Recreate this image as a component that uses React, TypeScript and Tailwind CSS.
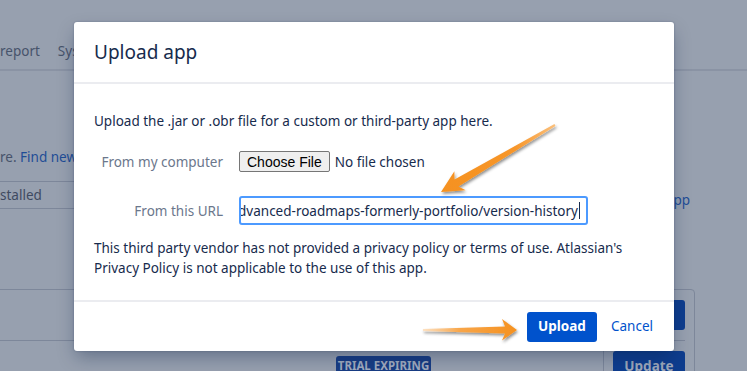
import React from 'react';

const FONT = "font-['Noto_Sans',sans-serif]";

// Orange callout arrows drawn over the dialog
function Arrows() {
  return (
    <svg className="pointer-events-none absolute inset-0" width="747" height="371" viewBox="0 0 747 371">
      <defs>
        <linearGradient id="a1" x1="555" y1="125" x2="441" y2="192" gradientUnits="userSpaceOnUse">
          <stop offset="0" stopColor="#fbbf7a" />
          <stop offset="0.35" stopColor="#f7962a" />
          <stop offset="1" stopColor="#f5911f" />
        </linearGradient>
        <linearGradient id="a2" x1="423" y1="330" x2="517" y2="330" gradientUnits="userSpaceOnUse">
          <stop offset="0" stopColor="#fde2c4" />
          <stop offset="0.4" stopColor="#f8a548" />
          <stop offset="1" stopColor="#f5911f" />
        </linearGradient>
        <filter id="sh" x="-20%" y="-20%" width="140%" height="140%">
          <feDropShadow dx="1" dy="2" stdDeviation="1.4" floodColor="#000" floodOpacity="0.45" />
        </filter>
      </defs>
      <polygon
        filter="url(#sh)"
        fill="url(#a1)"
        points="554.5,124.1 454.5,179.4 454.4,171.3 441,192 465.6,190.3 458.5,186.4 555.5,125.9"
      />
      <polygon
        filter="url(#sh)"
        fill="url(#a2)"
        points="423,329 505,326.5 502,319 517,330 502,340.5 505,333.5 423,331"
      />
    </svg>
  );
}

export default function App() {
  const url =
    'https://marketplace.atlassian.com/apps/1213016/advanced-roadmaps-formerly-portfolio/version-history';

  return (
    <div className={`relative h-[371px] w-[747px] overflow-hidden bg-[#97a0af] text-[13.5px] ${FONT}`}>
      {/* page behind the blanket */}
      <div className="flex h-[71px] items-end gap-[18px] border-b-2 border-[#8a93a4] pb-[8px] leading-[20px] text-[#47536b]">
        <span>report</span>
        <span>System</span>
      </div>

      <p className="mt-[76px] leading-[20px] text-[#47536b]">
        re. <span className="text-[#1f4d96]">Find new apps</span>
      </p>

      <div className="mt-[14px] flex">
        <div className="flex h-[28px] w-[520px] items-center border-y border-[#7d879a] leading-[20px] text-[#3f4a61]">
          stalled
        </div>
        <span className="ml-auto mr-[57px] mt-[9px] leading-[20px] text-[#1f4d96]">Upload app</span>
      </div>

      <div className="mt-[79px] flex">
        <div className="w-[520px]">
          <div className="h-[52px] border-y border-[#7d879a]"></div>
          <div className="ml-[336px] mt-[15px] flex h-[20px] w-[95px] items-center justify-center whitespace-nowrap rounded-[3px] bg-[#183d84] text-[11.5px] font-bold leading-none text-[#a2acbf]">
            TRIAL EXPIRING
          </div>
        </div>
        <div className="ml-auto mr-[52px] w-[92px] rounded-t-[4px] border border-[#7d879a] pr-[9px] pt-[10px]">
          <div className="ml-auto h-[30px] w-[72px] rounded-[3px] bg-[#0e3d8e]"></div>
          <div className="mt-[10px] border-t border-[#7d879a] pt-[10px]">
            <div className="ml-auto flex h-[30px] w-[72px] items-center justify-center rounded-[3px] bg-[#0e3d8e] font-bold text-[#9ea8ba]">
              Update
            </div>
          </div>
        </div>
      </div>

      {/* dialog */}
      <div className="absolute left-[74px] top-[22px] flex h-[329px] w-[600px] flex-col rounded-[3px] bg-white shadow-[0_8px_18px_-2px_rgba(9,30,66,0.35),0_0_2px_rgba(9,30,66,0.3)]">
        <div className="flex h-[62px] items-center border-b-2 border-[#ebecf0] px-[20px]">
          <h1 className="text-[19px] leading-[24px] text-[#172b4d]">Upload app</h1>
        </div>

        <div className="px-[20px] pt-[27px] leading-[20px] text-[#172b4d]">
          <p>Upload the .jar or .obr file for a custom or third-party app here.</p>

          <div className="mt-[20px] flex h-[21px] items-center">
            <label className="w-[130px] pr-[1px] text-right text-[#6b778c]">From my computer</label>
            <div className="ml-[15px] flex items-center">
              <span className="flex h-[21px] items-center rounded-[2px] border border-[#767676] bg-[#efefef] px-[7px] font-['Liberation_Sans',Arial,sans-serif] text-[14px] text-black">
                Choose File
              </span>
              <span className="ml-[5px]">No file chosen</span>
            </div>
          </div>

          <div className="mt-[24px] flex items-center">
            <label className="w-[130px] pr-[1px] text-right text-[#6b778c]">From this URL</label>
            <div className="ml-[15px] flex h-[29px] w-[349px] items-center justify-end overflow-hidden whitespace-nowrap rounded-[3px] border-2 border-[#4c9aff] pr-[6px]">
              <span className="shrink-0">{url}</span>
              <span className="ml-[1px] h-[17px] w-px shrink-0 bg-[#172b4d]"></span>
            </div>
          </div>

          <p className="mt-[13px]">
            This third party vendor has not provided a privacy policy or terms of use. Atlassian's
            <br />
            Privacy Policy is not applicable to the use of this app.
          </p>
        </div>

        <div className="mt-auto flex h-[51px] items-center justify-end gap-[14px] border-t-2 border-[#ebecf0] pr-[21px]">
          <button className="flex h-[30px] w-[70px] items-center justify-center rounded-[3px] bg-[#0052cc] font-bold text-white">
            Upload
          </button>
          <button className="text-[#0052cc]">Cancel</button>
        </div>
      </div>

      <Arrows />
    </div>
  );
}
